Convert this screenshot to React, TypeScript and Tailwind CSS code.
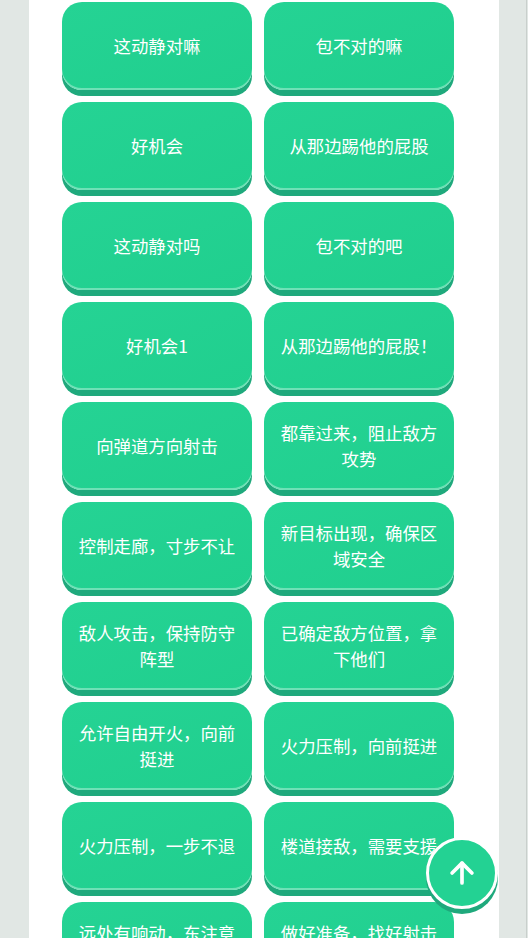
import React from "react";
import { ArrowUp } from "lucide-react";

const rows: [string, string][] = [
  ["这动静对嘛", "包不对的嘛"],
  ["好机会", "从那边踢他的屁股"],
  ["这动静对吗", "包不对的吧"],
  ["好机会1", "从那边踢他的屁股！"],
  ["向弹道方向射击", "都靠过来，阻止敌方攻势"],
  ["控制走廊，寸步不让", "新目标出现，确保区域安全"],
  ["敌人攻击，保持防守阵型", "已确定敌方位置，拿下他们"],
  ["允许自由开火，向前挺进", "火力压制，向前挺进"],
  ["火力压制，一步不退", "楼道接敌，需要支援"],
  ["远处有响动，东注意安全", "做好准备，找好射击位置"],
  ["注意掩护", "收到"],
];

function Btn({ text }: { text: string }) {
  return (
    <button className="h-[88px] w-[190px] rounded-[20px] bg-gradient-to-br from-[#25d394] to-[#20cf8e] px-[14px] text-center text-[17.4px] leading-[26px] text-white shadow-[inset_0_-2px_0_rgba(255,255,255,0.35),0_6px_0_#1fa97c]">
      {text}
    </button>
  );
}

export default function App() {
  return (
    <div
      className="relative h-[938px] w-[528px] overflow-hidden bg-[#e1e7e4]"
      style={{ fontFamily: '"Noto Sans CJK SC", "Noto Sans", sans-serif' }}
    >
      <div className="ml-[29px] h-full w-[470px] bg-white pl-[33px] pt-[2px]">
        <div className="grid w-[392px] grid-cols-[190px_190px] gap-x-[12px] gap-y-[12px]">
          {rows.map(([a, b], i) => (
            <React.Fragment key={i}>
              <Btn text={a} />
              <Btn text={b} />
            </React.Fragment>
          ))}
        </div>
      </div>
      <div className="absolute right-[1px] top-0 h-full w-[1px] bg-[#c9cfcc]" />
      <button className="absolute left-[426px] top-[837px] flex h-[72px] w-[72px] items-center justify-center rounded-full border-[3px] border-white bg-[#23d293] text-white shadow-[0_5px_0_#1fa97c]">
        <ArrowUp size={34} strokeWidth={2.6} />
      </button>
    </div>
  );
}
